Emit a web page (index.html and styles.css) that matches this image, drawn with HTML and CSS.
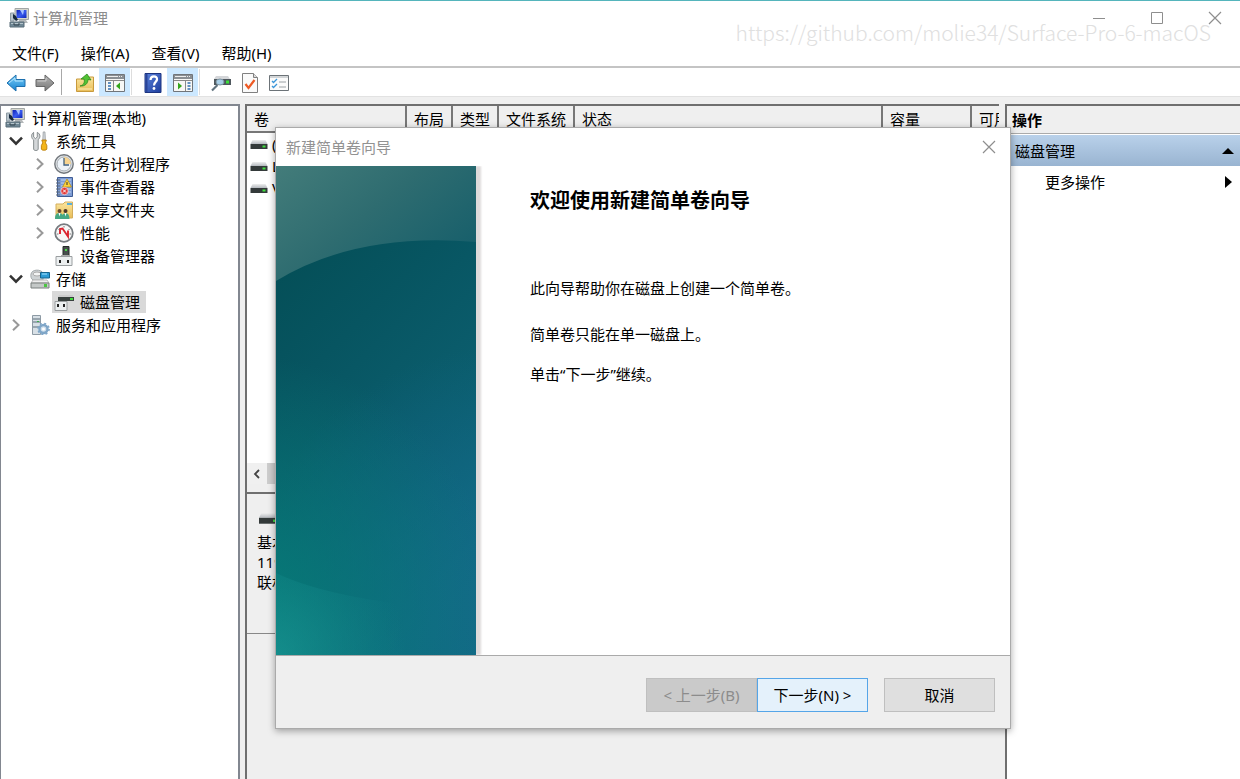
FILE: index.html
```html
<!DOCTYPE html>
<html lang="zh-CN">
<head>
<meta charset="utf-8">
<title>计算机管理</title>
<link rel="stylesheet" href="styles.css">
</head>
<body>
<svg class="defs" aria-hidden="true">
  <defs>
    <linearGradient id="gBlue" x1="0" y1="0" x2="1" y2="1"><stop offset="0" stop-color="#0a1fb4"/><stop offset=".5" stop-color="#3a5cf0"/><stop offset="1" stop-color="#0c24b8"/></linearGradient>
    <linearGradient id="gArrow" x1="0" y1="0" x2="0" y2="1"><stop offset="0" stop-color="#7cd0f8"/><stop offset="1" stop-color="#1481d0"/></linearGradient>
    <linearGradient id="gGray" x1="0" y1="0" x2="0" y2="1"><stop offset="0" stop-color="#b4b4b4"/><stop offset="1" stop-color="#777"/></linearGradient>
    <linearGradient id="gFolder" x1="0" y1="0" x2="0" y2="1"><stop offset="0" stop-color="#fbe6a0"/><stop offset="1" stop-color="#e8bd58"/></linearGradient>
    <linearGradient id="gHelp" x1="0" y1="0" x2="1" y2="1"><stop offset="0" stop-color="#5c84dc"/><stop offset="1" stop-color="#1c3c9c"/></linearGradient>
    <linearGradient id="gDisk" x1="0" y1="0" x2="0" y2="1"><stop offset="0" stop-color="#eee"/><stop offset="1" stop-color="#b4b8be"/></linearGradient>
  </defs>
  <symbol id="computer" viewBox="0 0 20 20">
    <path d="M6 .5h13.500v11H6z" fill="#d4d6cc" stroke="#a2a6a6"/><path d="M7.500 2h10v8h-10z" fill="url(#gBlue)"/><path d="M11 2l4 0-1 5z" fill="#a5c1ff"/>
    <path d="M10 12h7l2 3H9z" fill="#b4b8ba"/><path d="M1.500 5h3.500v8H1.500z" fill="#b8c4cc" stroke="#8f9ca4"/><path d="M4 6l3 2 2 4-2 1-3-3z" fill="#16283c"/>
    <path d="M1 14h14v5H1z" fill="#708896" stroke="#596d78"/><path d="M2 15.500h12" stroke="#b4c4cc"/><path d="M5 15v2h5v-2" fill="none" stroke="#34444e"/>
  </symbol>
  <symbol id="back" viewBox="0 0 20 20"><path d="M1 10L10 2v4.500h9v7h-9V18z" fill="url(#gArrow)" stroke="#1c6fae" stroke-linejoin="round"/><path d="M3 10l6-5v3h8" fill="none" stroke="#b5e6ff"/></symbol>
  <symbol id="forward" viewBox="0 0 20 20"><path d="M19 10L10 2v4.500H1v7h9V18z" fill="url(#gGray)" stroke="#666" stroke-linejoin="round"/><path d="M2.500 8H11V5" fill="none" stroke="#ccc"/></symbol>
  <symbol id="folderup" viewBox="0 0 20 20"><path d="M1.500 6h9l1-2h7v14.500h-17z" fill="url(#gFolder)" stroke="#c89a3c"/><path d="M3 16h14" stroke="#fff0bf"/><path d="M5 13c4-1 5-4 4-7H6l6-5 4 6-3-.5c0 4-3 7-8 6.500z" fill="#52c234" stroke="#2d8a20" stroke-width=".8"/></symbol>
  <symbol id="paneleft" viewBox="0 0 20 18"><path d="M.5.500h19v17H.5z" fill="#f7f7f5" stroke="#70757a"/><path d="M1 1h18v4H1z" fill="#8a8f94"/><path d="M2 2.500h11M14 2.500h1M16 2.500h1" stroke="#eee"/><path d="M1 6.500h18M8.500 7v10" stroke="#888"/><path d="M3 9h3M3 12h3M3 15h3" stroke="#306fb0" stroke-width="1.500"/><path d="M15 8.500v7l-4-3.500z" fill="#35a51c"/></symbol>
  <symbol id="paneright" viewBox="0 0 20 18"><path d="M.5.500h19v17H.5z" fill="#f7f7f5" stroke="#70757a"/><path d="M1 1h18v4H1z" fill="#8a8f94"/><path d="M2 2.500h11M14 2.500h1M16 2.500h1" stroke="#eee"/><path d="M1 6.500h18M12.500 7v10" stroke="#888"/><path d="M14.500 9h3M14.500 12h3M14.500 15h3" stroke="#306fb0" stroke-width="1.500"/><path d="M5 8.500v7l4-3.500z" fill="#35a51c"/></symbol>
  <symbol id="help" viewBox="0 0 18 20"><path d="M1 .5h16v19H1z" fill="url(#gHelp)" stroke="#1c3480"/><path d="M1.500 1h2v18h-2z" fill="#2a4598"/><path d="M6.500 7c0-5 7-4.500 6.500-.5-.3 2.500-3 2.500-3 6" fill="none" stroke="#fff" stroke-width="2.200"/><circle cx="10" cy="15.500" r="1.400" fill="#fff"/></symbol>
  <symbol id="rescan" viewBox="0 0 20 16"><path d="M5 1h12l2 3H3z" fill="#d4d6d9"/><path d="M3 4h17v6H3z" fill="#4f585e"/><path d="M15 5.500h3v3h-3z" fill="#3ae03a"/><ellipse cx="9" cy="7" rx="4" ry="3" fill="#a8cfe8" stroke="#7e95a2"/><path d="M6.500 10L1 15.500" stroke="#60727e" stroke-width="2.200"/></symbol>
  <symbol id="check" viewBox="0 0 16 20"><path d="M.5.500h11l4 4v15H.5z" fill="#fafafa" stroke="#808080"/><path d="M11.500.500v4h4" fill="#ddd" stroke="#808080"/><path d="M3.500 11l3 4 6-8" fill="none" stroke="#ee5a24" stroke-width="2.200"/></symbol>
  <symbol id="tasks" viewBox="0 0 20 16"><path d="M.5.500h19v15H.5z" fill="#fbfbfb" stroke="#6c7378"/><path d="M1 2h18" stroke="#aab0b4"/><path d="M3 6l1.500 1.500L8 4M3 11l1.500 1.500L8 9" fill="none" stroke="#3a95d8" stroke-width="1.300"/><path d="M10 7h7M10 12h7" stroke="#9aa0a4"/></symbol>
  <symbol id="tools" viewBox="0 0 20 22"><path d="M3 1.500v5l2 2 2-2v-5c4 2 3.500 6 1 8V20c0 2-5 2-5 0V10C.5 8-.5 4 3 1.500z" fill="#d4d7d9" stroke="#7e8487"/><path d="M13.500 1h2l.5 9h-3z" fill="#d0d4d8" stroke="#8d9296" stroke-width=".7"/><path d="M12 10h5l-1 3 1.500 3v4c0 1.500-6 1.500-6 0v-4l1.500-3z" fill="#f4b61a" stroke="#bb7e0a"/></symbol>
  <symbol id="clock" viewBox="0 0 20 20"><circle cx="10" cy="10" r="9.200" fill="#e0e3e6" stroke="#72777c" stroke-width="1.400"/><circle cx="10" cy="10" r="7" fill="#edf3f9" stroke="#a7adb3"/><path d="M10 3a7 7 0 0 1 7 7h-7z" fill="#f8d490"/><path d="M10 4v7h5" fill="none" stroke="#40607c" stroke-width="1.300"/></symbol>
  <symbol id="event" viewBox="0 0 18 20"><path d="M2.500.500h15v19h-15z" fill="#7d9cd4" stroke="#3f5c94"/><path d="M6 3h10M6 6h10M6 9h10M6 12h10M6 15h10" stroke="#c4d4f0"/><path d="M1 3h4M1 6h4M1 9h4M1 12h4M1 15h4M1 18h4" stroke="#5e6874"/><path d="M12 2l4.500 8h-9z" fill="#fbd23c" stroke="#b58a14" stroke-width=".7"/><path d="M12 5v3" stroke="#333"/><circle cx="9.500" cy="14" r="3.700" fill="#e23a3a" stroke="#fff" stroke-width=".6"/><path d="M8 12.500l3 3m0-3l-3 3" stroke="#fff"/></symbol>
  <symbol id="shared" viewBox="0 0 20 20"><path d="M2 4h7l2-2h7.500v16H2z" fill="url(#gFolder)" stroke="#d4ae5c"/><path d="M13 4h5" stroke="#58b0dc" stroke-width="2"/><circle cx="5.500" cy="11" r="2" fill="#6b4a30"/><circle cx="11.500" cy="11" r="2" fill="#4d3a2a"/><path d="M1 19c0-5 2-6 4.500-6 2 0 2.500 1 3 2 .5-1 1.500-2 3-2 2.500 0 4 2 4 6z" fill="#45a884"/><path d="M4.500 13l1 3.500 1-3.500M10.500 13l1 3.500 1-3.500" fill="#fff"/></symbol>
  <symbol id="gauge" viewBox="0 0 20 20"><circle cx="10" cy="10" r="8.800" fill="#f7f7f7" stroke="#777c80" stroke-width="1.800"/><path d="M6 11V6l2.500-.5 5.500 8V7.500" fill="none" stroke="#dc2430" stroke-width="1.900"/><path d="M4.500 6l1 1M10 3v1.500M15.500 6l-1 1M3 11h1.500M15.500 11H17" stroke="#777"/></symbol>
  <symbol id="device" viewBox="0 0 18 20"><path d="M8 .5h6v10H8z" fill="#464e4c" stroke="#252a28"/><path d="M10 3h2v2h-2z" fill="#49d847"/><path d="M6 9h9v3H6z" fill="#aaa"/><path d="M1 10.500h16v9H1z" fill="#eceff0" stroke="#9a9ea0"/><path d="M4 14h2v3H4zM12 14h2v3h-2z" fill="#222"/></symbol>
  <symbol id="storage" viewBox="0 0 20 20"><path d="M1 5c1-5 10-5 12-1v7H3C1 10 .5 7 1 5z" fill="#ced3d5" stroke="#a4aaac"/><ellipse cx="7" cy="5" rx="4" ry="2" fill="#f3f4f4" stroke="#aaa"/><path d="M10.500 3.500h9v5.500h-9z" fill="#2e9bd4" stroke="#16658f"/><path d="M12 5h5" stroke="#a8e4ff"/><path d="M3 11h14l2 3H1z" fill="#efefef" stroke="#bbb"/><path d="M1 14h18v5H1z" fill="#c4c8c7" stroke="#7b807f"/><path d="M14 15h3v3h-3z" fill="#4bc641"/></symbol>
  <symbol id="disk" viewBox="0 0 20 20"><path d="M5 3h14v2H4z" fill="#ccc"/><path d="M4 5h16v4H4z" fill="#39403e"/><path d="M16 6h3v2h-3z" fill="#42dc3e"/><path d="M1 9.500h12v9H1z" fill="#eceff0" stroke="#9a9ea0"/><path d="M3 12h2v3H3zM9 12h2v3H9z" fill="#222"/></symbol>
  <symbol id="services" viewBox="0 0 20 20"><path d="M2.500.500h8v19h-8z" fill="#d8e0e6" stroke="#8d9aa4"/><path d="M3 4h7M3 7h7M3 12h7" stroke="#5a6c78"/><path d="M7 6h2v1H7z" fill="#3bb04a"/><circle cx="13.500" cy="14" r="4" fill="#cfdfec" stroke="#7fa6c8" stroke-width="2.400"/><circle cx="13.500" cy="14" r="5.600" fill="none" stroke="#7fa6c8" stroke-width="1.500" stroke-dasharray="2 2.400"/><circle cx="13.500" cy="14" r="1.500" fill="#fff"/></symbol>
  <symbol id="volume" viewBox="0 0 17 10"><path d="M2 0h13l2 4H0z" fill="url(#gDisk)"/><path d="M0 4h17v5H0z" fill="#343a3a"/><path d="M12 5.500h3v2h-3z" fill="#3fe03f"/></symbol>
  <symbol id="right" viewBox="0 0 8 12"><path d="M1 .8L6.500 6 1 11.200" fill="none" stroke="#999" stroke-width="2"/></symbol>
  <symbol id="down" viewBox="0 0 12 8"><path d="M1.500 1.500L6 6l4.500-4.500" fill="none" stroke="#333" stroke-width="1.900"/></symbol>
  <symbol id="close" viewBox="0 0 14 14"><path d="M1 1l12 12M13 1L1 13" stroke="#8e8e8e" stroke-width="1.200"/></symbol>
</svg>

<div class="window">
  <header class="titlebar">
    <svg class="icon"><use href="#computer"/></svg>
    <span class="title">计算机管理</span>
    <div class="controls">
      <button class="control" aria-label="最小化"><svg viewBox="0 0 14 14"><path d="M1 7.500h12" stroke="#8e8e8e"/></svg></button>
      <button class="control" aria-label="最大化"><svg viewBox="0 0 14 14"><path d="M1.500 1.500h11v11h-11z" fill="none" stroke="#8e8e8e"/></svg></button>
      <button class="control" aria-label="关闭"><svg><use href="#close"/></svg></button>
    </div>
    <span class="watermark">https://github.com/molie34/Surface-Pro-6-macOS</span>
  </header>

  <nav class="menubar">
    <button>文件(F)</button><button>操作(A)</button><button>查看(V)</button><button>帮助(H)</button>
  </nav>

  <div class="toolbar">
    <button aria-label="后退"><svg class="icon"><use href="#back"/></svg></button>
    <button aria-label="前进"><svg class="icon"><use href="#forward"/></svg></button>
    <span class="divider"></span>
    <button aria-label="上一级"><svg class="icon"><use href="#folderup"/></svg></button>
    <button class="on" aria-label="显示控制台树"><svg class="icon"><use href="#paneleft"/></svg></button>
    <span class="divider short"></span>
    <button aria-label="帮助主题"><svg class="icon"><use href="#help"/></svg></button>
    <button class="on" aria-label="显示操作窗格"><svg class="icon"><use href="#paneright"/></svg></button>
    <span class="divider short"></span>
    <button aria-label="重新扫描"><svg class="icon"><use href="#rescan"/></svg></button>
    <button aria-label="属性"><svg class="icon"><use href="#check"/></svg></button>
    <button aria-label="任务"><svg class="icon"><use href="#tasks"/></svg></button>
  </div>

  <main class="panes">
    <ul class="tree">
      <li class="node root"><svg class="icon"><use href="#computer"/></svg><span>计算机管理(本地)</span></li>
      <li class="node l1"><svg class="arrow"><use href="#down"/></svg><svg class="icon"><use href="#tools"/></svg><span>系统工具</span></li>
      <li class="node l2"><svg class="arrow"><use href="#right"/></svg><svg class="icon"><use href="#clock"/></svg><span>任务计划程序</span></li>
      <li class="node l2"><svg class="arrow"><use href="#right"/></svg><svg class="icon"><use href="#event"/></svg><span>事件查看器</span></li>
      <li class="node l2"><svg class="arrow"><use href="#right"/></svg><svg class="icon"><use href="#shared"/></svg><span>共享文件夹</span></li>
      <li class="node l2"><svg class="arrow"><use href="#right"/></svg><svg class="icon"><use href="#gauge"/></svg><span>性能</span></li>
      <li class="node l2"><span class="arrow"></span><svg class="icon"><use href="#device"/></svg><span>设备管理器</span></li>
      <li class="node l1"><svg class="arrow"><use href="#down"/></svg><svg class="icon"><use href="#storage"/></svg><span>存储</span></li>
      <li class="node l2"><span class="arrow"></span><span class="selected"><svg class="icon"><use href="#disk"/></svg><span>磁盘管理</span></span></li>
      <li class="node l1"><svg class="arrow"><use href="#right"/></svg><svg class="icon"><use href="#services"/></svg><span>服务和应用程序</span></li>
    </ul>

    <section class="center">
      <div class="volumes">
        <table>
          <colgroup><col class="c-vol"><col class="c-short"><col class="c-short"><col class="c-fs"><col><col class="c-cap"><col class="c-free"></colgroup>
          <thead><tr><th>卷</th><th>布局</th><th>类型</th><th>文件系统</th><th>状态</th><th>容量</th><th>可用</th></tr></thead>
          <tbody>
            <tr><td colspan="7"><svg><use href="#volume"/></svg>(</td></tr>
            <tr><td colspan="7"><svg><use href="#volume"/></svg>L</td></tr>
            <tr><td colspan="7"><svg><use href="#volume"/></svg>V</td></tr>
          </tbody>
        </table>
        <div class="scroll"><button aria-label="向左滚动"><svg viewBox="0 0 8 12"><path d="M6 2L2 6l4 4" fill="none" stroke="#444" stroke-width="1.800"/></svg></button><span class="thumb"></span></div>
      </div>
      <div class="disks">
        <div class="disk">
          <svg><use href="#volume"/></svg>
          <p>基本</p><p>119</p><p>联机</p>
        </div>
      </div>
    </section>

    <aside class="actions">
      <h2>操作</h2>
      <button class="group">磁盘管理<svg viewBox="0 0 12 6"><path d="M0 6l6-6 6 6z"/></svg></button>
      <button class="more">更多操作<svg viewBox="0 0 7 12"><path d="M0 0l7 6-7 6z"/></svg></button>
    </aside>
  </main>

  <section class="dialog" role="dialog" aria-labelledby="wizard">
    <header><span id="wizard">新建简单卷向导</span><button aria-label="关闭向导"><svg><use href="#close"/></svg></button></header>
    <div class="page">
      <svg class="banner" viewBox="0 0 200 489" preserveAspectRatio="none" aria-hidden="true">
        <defs>
          <linearGradient id="gBase" x1=".2" y1="0" x2=".6" y2="1"><stop offset="0" stop-color="#034c53"/><stop offset=".35" stop-color="#075561"/><stop offset=".7" stop-color="#0c5f70"/><stop offset="1" stop-color="#106c80"/></linearGradient>
          <radialGradient id="gTeal" gradientUnits="userSpaceOnUse" cx="-30" cy="440" r="250"><stop offset="0" stop-color="#067c78"/><stop offset=".4" stop-color="#067a76" stop-opacity=".6"/><stop offset="1" stop-color="#067a76" stop-opacity="0"/></radialGradient>
          <radialGradient id="gSea" gradientUnits="userSpaceOnUse" cx="230" cy="440" r="260"><stop offset="0" stop-color="#146a88"/><stop offset="1" stop-color="#10668a" stop-opacity="0"/></radialGradient>
          <radialGradient id="gGlow" gradientUnits="userSpaceOnUse" cx="0" cy="489" r="130"><stop offset="0" stop-color="#1c9c98" stop-opacity=".6"/><stop offset="1" stop-color="#168c90" stop-opacity="0"/></radialGradient>
          <linearGradient id="gTop" x1="0" y1="0" x2="1" y2=".7"><stop offset="0" stop-color="#437c7a"/><stop offset=".5" stop-color="#2e6c70"/><stop offset="1" stop-color="#175f6b"/></linearGradient>
        </defs>
        <path d="M0 0h200v489H0z" fill="url(#gBase)"/>
        <path d="M0 0h200v489H0z" fill="url(#gSea)"/>
        <path d="M0 0h200v489H0z" fill="url(#gTeal)"/>
        <path d="M0 0h200v76Q80 66 0 115z" fill="url(#gTop)"/>
        <path d="M0 407Q60 436 200 445V489H0z" fill="url(#gGlow)"/>
      </svg>
      <div class="copy">
        <h1>欢迎使用新建简单卷向导</h1>
        <p class="lead">此向导帮助你在磁盘上创建一个简单卷。</p>
        <p>简单卷只能在单一磁盘上。</p>
        <p>单击“下一步”继续。</p>
      </div>
    </div>
    <footer>
      <button disabled>&lt; 上一步(B)</button>
      <button class="primary">下一步(N) &gt;</button>
      <button class="cancel">取消</button>
    </footer>
  </section>
</div>
</body>
</html>
```

FILE: styles.css
```css
* { box-sizing: border-box; }

body {
  margin: 0;
  font: 15px/20px "Noto Sans", "Noto Sans CJK SC", sans-serif;
  color: #000;
  background: #efefef;
}

button {
  font: inherit;
  color: inherit;
  border: 0;
  padding: 0;
  background: none;
}

h1, h2, p, ul { margin: 0; padding: 0; }
svg { display: block; flex: none; }
.defs { position: absolute; width: 0; height: 0; }
.icon { width: 20px; height: 20px; }

.window {
  position: relative;
  min-height: 100vh;
  display: flex;
  flex-direction: column;
}

.titlebar {
  position: relative;
  height: 37px;
  display: flex;
  align-items: center;
  gap: 4px;
  padding: 0 0 2px 9px;
  background: #fff;
  border-top: 1px solid #55b5bc;
}
.title { color: #8c8c8c; }
.controls { display: flex; margin-left: auto; padding-right: 4px; }
.control { width: 58px; height: 34px; display: grid; place-items: center; }
.control:last-child { width: 42px; margin-left: 8px; }
.control svg, .dialog header svg { width: 14px; height: 14px; }
.watermark {
  position: absolute;
  right: 29px;
  top: 15px;
  font: 300 21px/32px "Noto Sans CJK SC", sans-serif;
  color: #e0e0e0;
  pointer-events: none;
}

.menubar {
  display: flex;
  gap: 22px;
  height: 31px;
  padding: 2px 12px 0;
  background: #fff;
  border-bottom: 2px solid #c4c4c4;
}

.toolbar {
  display: flex;
  align-items: center;
  height: 29px;
  padding-left: 1px;
  background: #fff;
  border-bottom: 1px solid #e2e2e2;
}
.toolbar button { width: 29px; height: 28px; display: grid; place-items: center; padding-top: 2px; }
.toolbar .on { width: 31px; background: #cce8ff; }
.divider { width: 1px; height: 26px; margin: 0 8px 0 2px; background: #a8a8a8; }
.divider.short { margin: 0 6px 0 1px; background: #ddd; }

.panes {
  flex: 1;
  display: grid;
  grid-template-columns: 240px minmax(0, 1fr) 235px;
  gap: 5px;
  padding-top: 7px;
}

.tree {
  list-style: none;
  background: #fff;
  border: solid #828790;
  border-width: 2px 2px 0 1px;
}
.node { display: flex; align-items: center; height: 23px; gap: 4px; }
.node .arrow { width: 16px; height: 12px; margin-right: 2px; }
.node > .icon { margin-right: 2px; }
.root { padding-left: 4px; gap: 5px; }
.l1 { padding-left: 7px; }
.l2 { padding-left: 31px; }
.selected {
  display: flex;
  align-items: center;
  gap: 6px;
  height: 22px;
  margin-left: -2px;
  padding: 0 6px 0 2px;
  background: #d9d9d9;
}

.center { display: grid; grid-template-rows: 388px 1fr; min-width: 0; padding-right: 1px; }
.volumes {
  display: flex;
  flex-direction: column;
  overflow: hidden;
  background: #fff;
  border: solid #6f6f6f;
  border-width: 2px 0 0 2px;
}
table { width: 100%; table-layout: fixed; border-collapse: separate; border-spacing: 0; }
.c-vol { width: 160px; }
.c-short { width: 46px; }
.c-fs { width: 76px; }
.c-cap { width: 89px; }
.c-free { width: 27px; }
th {
  height: 27px;
  padding: 0 0 0 7px;
  font-weight: 400;
  text-align: left;
  white-space: nowrap;
  overflow: hidden;
  background: #efefef;
  border-right: 2px solid #777;
  border-bottom: 2px solid #777;
}
th:last-child { border-right: 0; }
td { height: 22px; padding: 0 0 0 3px; }
td svg { display: inline-block; width: 18px; height: 10px; margin-right: 4px; }
.scroll { display: flex; height: 29px; margin-top: auto; background: #f0f0f0; border-bottom: 8px solid #efefef; }
.scroll button { width: 20px; display: grid; place-items: center; }
.scroll button svg { width: 8px; height: 12px; }
.thumb { width: 600px; background: #cdcdcd; }

.disks { border: solid #6f6f6f; border-width: 2px 0 0 2px; background: #efefef; }
.disk {
  height: 140px;
  padding: 19px 0 0 10px;
  border-bottom: 1px solid #888;
}
.disk svg { width: 20px; height: 12px; margin: 0 0 7px 2px; }

.actions { background: #fff; border: solid #6f6f6f; border-width: 2px 0 0 2px; }
.actions h2 {
  height: 28px;
  padding: 4px 5px;
  font-size: 15px;
  line-height: 20px;
  background: #efefef;
  border-bottom: 1px solid #aaa;
}
.actions button { display: flex; align-items: center; justify-content: space-between; width: 100%; height: 31px; }
.group { margin-top: 1px; padding: 0 6px 0 8px; background: linear-gradient(#b9d1ea, #99b4d1); }
.group svg { width: 12px; height: 6px; }
.more { padding: 0 8px 0 38px; }
.more svg { width: 7px; height: 12px; }

.dialog {
  position: absolute;
  left: 276px;
  right: 230px;
  top: 128px;
  background: #fff;
  box-shadow: 0 0 0 1px #aaa, 0 2px 7px 1px rgba(0, 0, 0, .35);
}
.dialog header {
  display: flex;
  align-items: center;
  justify-content: space-between;
  height: 38px;
  padding: 0 14px 0 10px;
  color: #929292;
}
.page { display: flex; }
.banner { width: 200px; height: 489px; box-shadow: 5px 0 2px #dedada; clip-path: inset(0 -8px 0 0); }
.copy { flex: 1; padding: 20px 20px 0 54px; }
.copy h1 { font-size: 20px; line-height: 30px; margin-bottom: 62px; }
.copy p { margin-bottom: 20px; }
.copy .lead { margin-bottom: 26px; }
.dialog footer {
  display: flex;
  justify-content: flex-end;
  padding: 22px 15px 16px;
  background: #efefef;
  border-top: 1px solid #aaa;
}
.dialog footer button { width: 111px; height: 34px; border: 1px solid #bfbfbf; background: #dfdfdf; }
.dialog footer button:disabled { color: #8c8c8c; background: #cacaca; }
.dialog footer .primary { border-color: #55a5e8; background: #e4f1fb; }
.dialog footer .cancel { margin-left: 16px; }
```
